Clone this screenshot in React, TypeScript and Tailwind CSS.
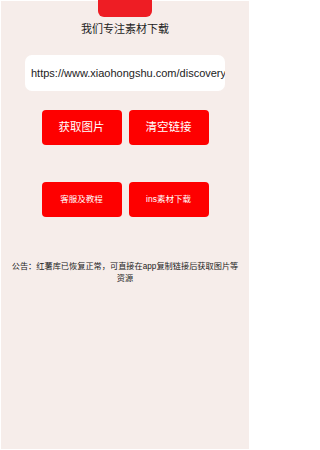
import React from "react";

const cjk = "font-['Liberation_Sans','Noto_Sans_CJK_SC',sans-serif]";

const RedButton: React.FC<{ label: string; small?: boolean }> = ({ label, small }) => (
  <button
    type="button"
    className={`w-[80px] h-[35px] rounded-[4px] bg-[#fe0000] text-white ${cjk} ${
      small ? "text-[8.5px]" : "text-[11.5px]"
    }`}
  >
    {label}
  </button>
);

export default function App() {
  return (
    <div className="w-[250px] h-[450px] bg-white p-px">
      <div className={`h-full bg-[#f6edea] flex flex-col items-center ${cjk}`}>
        {/* top tab */}
        <div className="-mt-px w-[54px] h-[17px] bg-[#ee1d24] rounded-b-[6px]" />

        <h1 className="mt-[5px] text-[11px] leading-[14px] text-[#222]">
          我们专注素材下载
        </h1>

        {/* link input */}
        <input
          readOnly
          value="https://www.xiaohongshu.com/discovery/item/64f1"
          className="mt-[19px] w-[200px] h-[36px] rounded-[7px] bg-white pl-[6px] text-[11px] text-[#222] outline-none"
        />

        <div className="mt-[19px] flex gap-[7px]">
          <RedButton label="获取图片" />
          <RedButton label="清空链接" />
        </div>

        <div className="mt-[37px] flex gap-[7px]">
          <RedButton label="客服及教程" small />
          <RedButton label="ins素材下载" small />
        </div>

        <p className="mt-[44px] w-[231px] text-center text-[8.2px] leading-[12px] text-[#222]">
          公告：红薯库已恢复正常，可直接在app复制链接后获取图片等资源
        </p>
      </div>
    </div>
  );
}
